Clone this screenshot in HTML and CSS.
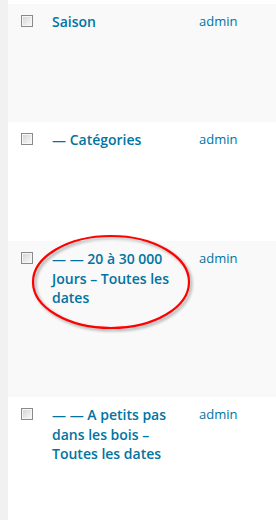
FILE: index.html
```html
<!DOCTYPE html>
<html lang="fr">
<head>
  <meta charset="UTF-8">
  <title>Pages</title>
  <link rel="stylesheet" href="styles.css">
</head>
<body>

  <div class="list">
    <div class="row alt h1">
      <div class="check"><span class="box"></span></div>
      <div class="title"><a href="#">Saison</a></div>
      <div class="author"><a href="#">admin</a></div>
    </div>

    <div class="row h2">
      <div class="check"><span class="box"></span></div>
      <div class="title"><a href="#">— Catégories</a></div>
      <div class="author"><a href="#">admin</a></div>
    </div>

    <div class="row alt h3">
      <div class="check"><span class="box"></span></div>
      <div class="title"><a href="#">— — 20 à 30 000 Jours – Toutes les dates</a></div>
      <div class="author"><a href="#">admin</a></div>
      <svg class="circle" width="164" height="100" viewBox="0 0 164 100">
        <ellipse cx="82" cy="50" rx="78" ry="46" fill="none" stroke="#f00" stroke-width="2.2"/>
      </svg>
    </div>

    <div class="row h4">
      <div class="check"><span class="box"></span></div>
      <div class="title"><a href="#">— — A petits pas dans les bois – Toutes les dates</a></div>
      <div class="author"><a href="#">admin</a></div>
    </div>
  </div>

</body>
</html>
```

FILE: styles.css
```css
body {
  margin: 0;
  background: #f1f1f1;
  font-family: "Open Sans", "Liberation Sans", sans-serif;
}
a {
  color: #0074a2;
  text-decoration: none;
}
.list {
  margin-left: 8px;
  padding-top: 4px;
  background: #fff;
  min-height: 516px;
}
.row {
  position: relative;
  display: grid;
  grid-template-columns: 34px 147px 1fr;
  align-items: start;
  background: #fff;
}
.row.alt {
  background: #f9f9f9;
}
.h1 { height: 118px; }
.h2 { height: 119px; }
.h3 { height: 156px; }
.h4 { height: 123px; }
.check {
  padding: 11px 0 0 13px;
}
.box {
  display: block;
  width: 10px;
  height: 10px;
  border: 1px solid #8a8a8a;
  box-shadow: inset 0 0 0 1px #f6f6f6;
  background: linear-gradient(135deg, #d2d2d2, #fbfbfb);
}
.title {
  padding: 8px 10px;
  font-size: 14px;
  font-weight: 600;
  line-height: 19.5px;
}
.author {
  padding: 8px 10px;
  font-size: 13px;
  line-height: 19.5px;
}
.circle {
  position: absolute;
  left: 21px;
  top: -9px;
  filter: drop-shadow(2px 2px 1.5px rgba(0, 0, 0, 0.35));
}
```
